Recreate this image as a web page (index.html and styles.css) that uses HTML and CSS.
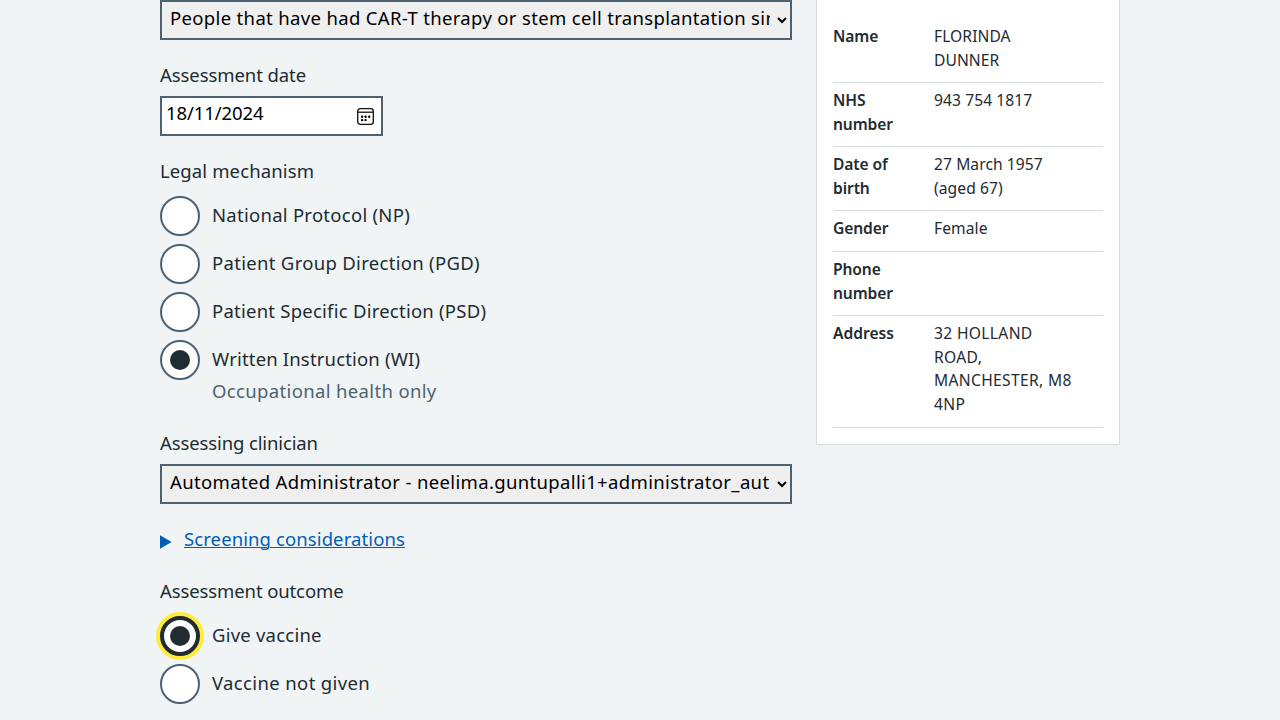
FILE: index.html
```html
<!DOCTYPE html>
<html lang="en">
<head>
<meta charset="utf-8">
<title>Assess patient</title>
<link rel="stylesheet" href="styles.css">
</head>
<body>
<div class="container">
  <main class="form">
    <select class="select select--eligibility" aria-label="Eligibility"><option>People that have had CAR-T therapy or stem cell transplantation since receiving their last vaccination</option></select>

    <div class="group">
      <div class="label label--date">Assessment date</div>
      <div class="date"><span class="date__value">18/11/2024</span>
        <svg class="date__icon" width="18" height="18" viewBox="0 0 18 18" fill="none" stroke="#111" stroke-width="1.3"><rect x=".7" y=".7" width="15.6" height="15.6" rx="2.6"/><path d="M.7 4.2h15.6"/><g fill="#000" stroke="none"><circle cx="5.1" cy="8.8" r="1.2"/><circle cx="8.6" cy="8.8" r="1.2"/><circle cx="12.2" cy="8.8" r="1.2"/><circle cx="5.1" cy="12.1" r="1.2"/><circle cx="8.6" cy="12.1" r="1.2"/></g></svg>
      </div>
    </div>

    <div class="group">
      <div class="label label--legend label--legal">Legal mechanism</div>
      <div class="radios">
        <label class="radio"><span class="radio__dot"></span><span class="radio__text t-np">National Protocol (NP)</span></label>
        <label class="radio"><span class="radio__dot"></span><span class="radio__text t-pgd">Patient Group Direction (PGD)</span></label>
        <label class="radio"><span class="radio__dot"></span><span class="radio__text t-psd">Patient Specific Direction (PSD)</span></label>
        <label class="radio"><span class="radio__dot radio__dot--checked"></span><span class="radio__text t-wi">Written Instruction (WI)</span></label>
      </div>
      <div class="hint"><span class="t-hint">Occupational health only</span></div>
    </div>

    <div class="group">
      <div class="label label--clinician">Assessing clinician</div>
      <select class="select select--clinician" aria-label="Assessing clinician"><option>Automated Administrator - neelima.guntupalli1+administrator_automation@example.com</option></select>
    </div>

    <div class="group details">
      <svg class="details__arrow" width="12" height="14" viewBox="0 0 12 14"><path d="M0 .3v13.4L11.6 7z" fill="#005eb8"/></svg>
      <span class="details__text">Screening considerations</span>
    </div>

    <div class="group">
      <div class="label label--legend label--outcome">Assessment outcome</div>
      <div class="radios">
        <label class="radio"><span class="radio__dot radio__dot--checked radio__dot--focus"></span><span class="radio__text t-give">Give vaccine</span></label>
        <label class="radio"><span class="radio__dot"></span><span class="radio__text t-not">Vaccine not given</span></label>
      </div>
    </div>
  </main>

  <aside class="card">
    <dl class="summary">
      <div class="row"><dt>Name</dt><dd>FLORINDA<br>DUNNER</dd></div>
      <div class="row row--nhs"><dt>NHS<br>number</dt><dd>943 754 1817</dd></div>
      <div class="row"><dt>Date of<br>birth</dt><dd>27 March 1957<br>(aged 67)</dd></div>
      <div class="row"><dt>Gender</dt><dd>Female</dd></div>
      <div class="row"><dt>Phone<br>number</dt><dd></dd></div>
      <div class="row row--address"><dt>Address</dt><dd>32 HOLLAND<br>ROAD,<br>MANCHESTER, M8<br>4NP</dd></div>
    </dl>
  </aside>
</div>
</body>
</html>
```
FILE: styles.css
```css
* { box-sizing: border-box; }
body {
  margin: 0;
  height: 720px;
  overflow: hidden;
  background: #f0f4f5;
  color: #212b32;
  font-family: "Noto Sans", "Open Sans", sans-serif;
  font-size: 18.5px;
}
.container {
  display: flex;
  align-items: flex-start;
  gap: 24px;
  width: 960px;
  margin: 0 auto;
}
.form { width: 632px; }
.group { margin-top: 24px; }
.select {
  display: block;
  width: 100%;
  height: 40px;
  margin: 0;
  padding: 1px 4px 7px;
  border: 2px solid #4c6272;
  border-radius: 0;
  background: #efefef;
  color: #000;
  font: inherit;
}
.select--eligibility { letter-spacing: 0.34px; }
.select--clinician { letter-spacing: 0.35px; }
.label {
  height: 28px;
  margin-bottom: 4px;
  line-height: 22px;
}
.label--legend { margin-bottom: 8px; }
.label--date { letter-spacing: -0.08px; }
.label--legal { letter-spacing: 0.12px; }
.label--clinician { letter-spacing: -0.12px; }
.label--outcome { letter-spacing: -0.11px; }
.date {
  display: flex;
  align-items: center;
  justify-content: space-between;
  width: 223px;
  height: 40px;
  padding: 0 6px 0 4px;
  border: 2px solid #4c6272;
  background: #fff;
  color: #000;
}
.date__value {
  padding-bottom: 7px;
  letter-spacing: -0.08px;
}
.date__icon { margin-top: 2px; }
.radios { display: grid; gap: 8px; }
.radio {
  display: flex;
  gap: 12px;
  height: 40px;
  line-height: 38px;
}
.t-np { letter-spacing: 0.27px; }
.t-pgd { letter-spacing: 0.31px; }
.t-psd { letter-spacing: 0.24px; }
.t-wi { letter-spacing: 0.17px; }
.t-hint { letter-spacing: 0.35px; }
.t-give { letter-spacing: 0.22px; }
.t-not { letter-spacing: 0.37px; }
.radio__dot {
  display: grid;
  place-items: center;
  width: 40px;
  height: 40px;
  border: 2px solid #4c6272;
  border-radius: 50%;
  background: #fff;
}
.radio__dot--checked::after {
  content: "";
  width: 20px;
  height: 20px;
  border-radius: 50%;
  background: #212b32;
}
.radio__dot--focus {
  border: 4px solid #212b32;
  box-shadow: 0 0 0 4px #ffeb3b;
}
.hint {
  height: 28px;
  padding-left: 52px;
  color: #4c6272;
  line-height: 22px;
}
.details {
  display: flex;
  gap: 12px;
  height: 28px;
  color: #005eb8;
  line-height: 22px;
}
.details__arrow { margin-top: 7px; }
.details__text {
  letter-spacing: 0.1px;
  text-decoration: underline;
  text-decoration-thickness: 1px;
}
.card {
  width: 304px;
  height: 445px;
  padding: 17.75px 16px 0;
  border: 1px solid #d8dde0;
  border-top: 0;
  background: #fff;
}
.summary { margin: 0; font-size: 15.6px; line-height: 23.66px; }
.row {
  display: flex;
  padding: 6px 0 10px;
  border-bottom: 1px solid #d8dde0;
}
.row:first-child { line-height: 24px; }
.row--nhs { padding: 5.5px 0 9.82px; line-height: 24px; }
.row dt {
  width: 101px;
  font-weight: 600;
  letter-spacing: -0.1px;
}
.row dd { margin: 0; letter-spacing: 0.08px; }
.row--address { padding-bottom: 10.4px; line-height: 23.56px; }
.row--address dt { letter-spacing: 0; }
.row--address dd { letter-spacing: 0.34px; }
```
